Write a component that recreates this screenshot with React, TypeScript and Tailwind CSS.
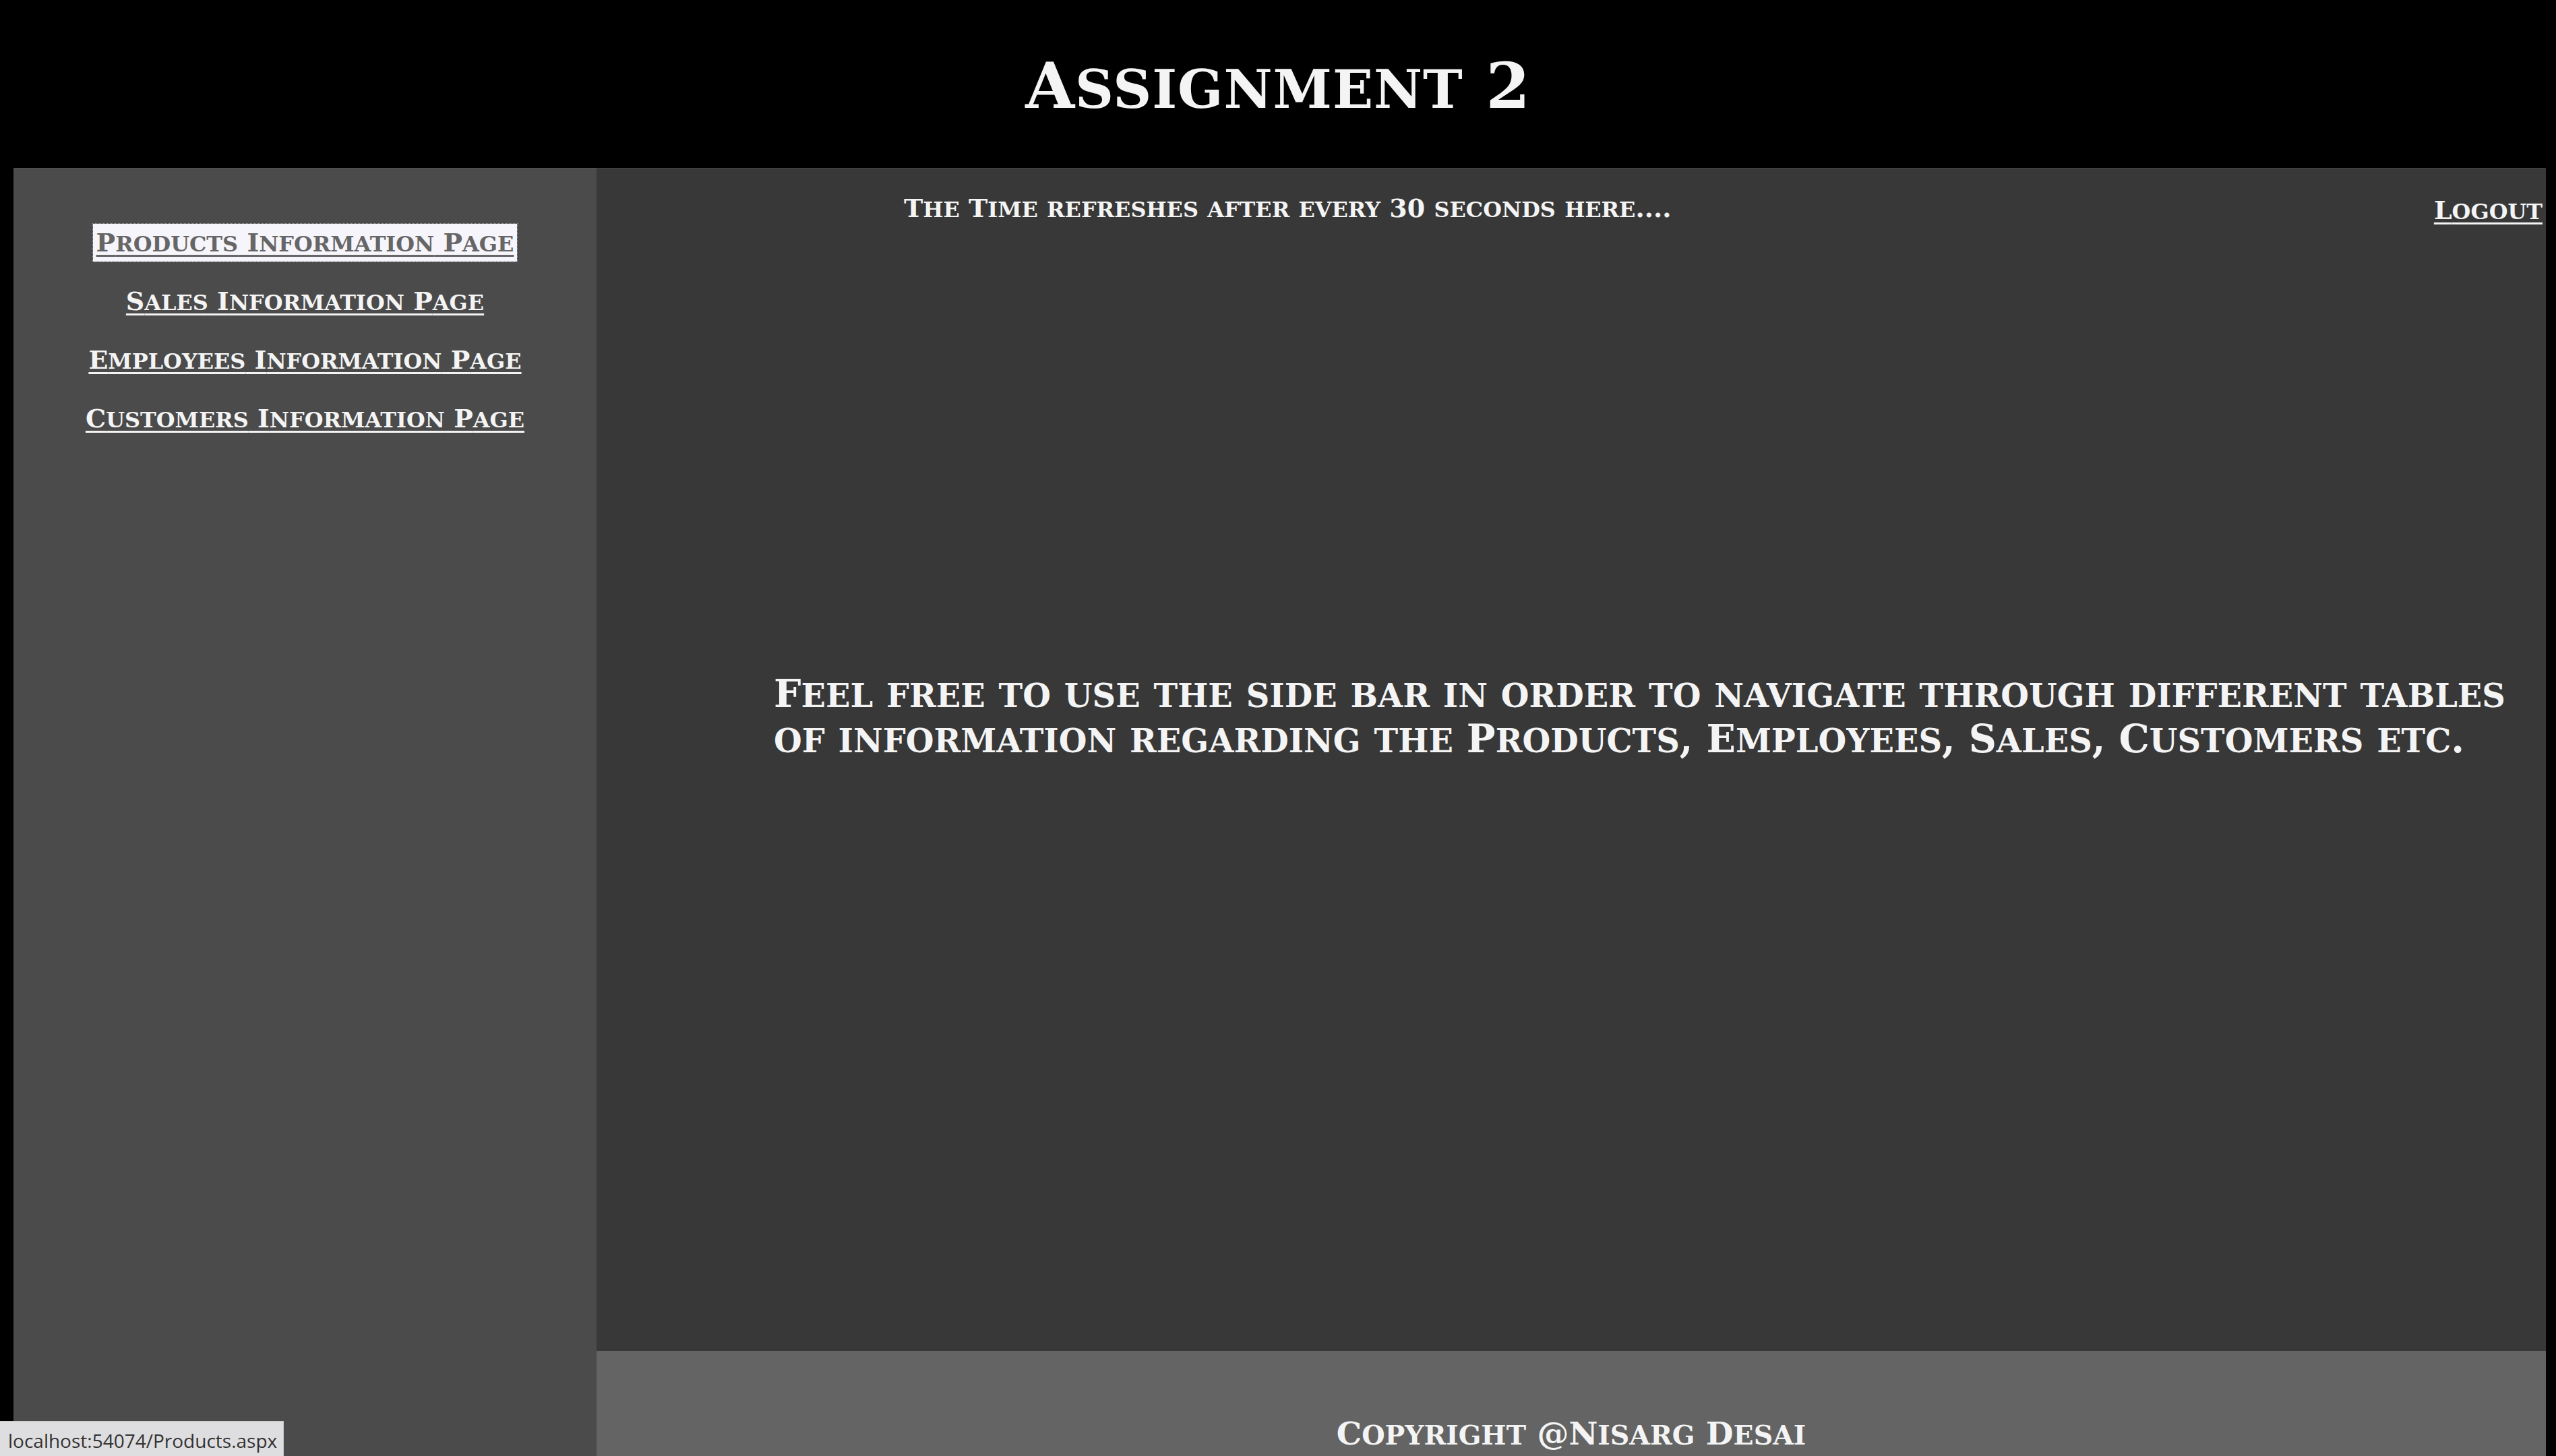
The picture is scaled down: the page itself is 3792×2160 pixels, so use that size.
const nav = [
  'Products Information Page',
  'Sales Information Page',
  'Employees Information Page',
  'Customers Information Page',
];

const cap = "font-['DejaVu_Serif',serif] font-bold";

// Copperplate-like small caps: lowercase letters shown as slightly smaller capitals
function SmallCaps({ text }: { text: string }) {
  const runs: { small: boolean; s: string }[] = [];
  for (const ch of text) {
    const small = ch !== ch.toUpperCase();
    const last = runs[runs.length - 1];
    if (last && last.small === small) last.s += ch;
    else runs.push({ small, s: ch });
  }
  return (
    <>
      {runs.map((r, i) =>
        r.small ? (
          <span key={i} className="text-[0.84em] uppercase">
            {r.s}
          </span>
        ) : (
          <span key={i}>{r.s}</span>
        ),
      )}
    </>
  );
}

export default function App() {
  return (
    <div className="h-screen overflow-hidden bg-black text-[#f4f4f4]">
      <header className="h-[249px] pt-[80px] text-center">
        <h1 className={`${cap} text-[94px] leading-none tracking-[0.01em]`}>
          <SmallCaps text="Assignment 2" />
        </h1>
      </header>

      <div className="flex h-[1911px] pl-[20px] pr-[15px]">
        <aside className="w-[865px] shrink-0 border-t border-[#545454] bg-[#4b4b4b] pt-[82px]">
          <nav className="flex flex-col items-center gap-[31px]">
            {nav.map((item, i) => (
              <a
                key={item}
                href="#"
                className={`${cap} px-[5px] py-[9px] text-[38px] leading-none underline decoration-[3px] underline-offset-[5px] ${
                  i === 0
                    ? 'bg-[#f5f5fb] text-[#666666] outline-1 outline-dotted outline-[#9a9a9a]'
                    : 'text-[#f4f4f4]'
                }`}
              >
                <SmallCaps text={item} />
              </a>
            ))}
          </nav>
        </aside>

        <div className="flex flex-1 flex-col">
          <main className="h-[1755px] border-t border-[#454545] bg-[#383838]">
            <div className="flex items-start justify-between pt-[40px] pr-[5px] pl-[456px]">
              <p className={`${cap} text-[38px] leading-none`}>
                <SmallCaps text="The Time refreshes after every 30 seconds here...." />
              </p>
              <a
                href="#"
                className={`${cap} mt-[3px] text-[38px] leading-none underline decoration-[3px] underline-offset-[5px]`}
              >
                <SmallCaps text="Logout" />
              </a>
            </div>
            <p className={`${cap} mt-[666px] pl-[263px] text-[57px] leading-[64px]`}>
              <SmallCaps text="Feel free to use the side bar in order to navigate through different tables" />
              <br />
              <SmallCaps text="of information regarding the Products, Employees, Sales, Customers etc." />
            </p>
          </main>
          <footer className="flex-1 bg-[#646464] pt-[99px] text-center">
            <p className={`${cap} text-[47px] leading-none`}>
              <SmallCaps text="Copyright @Nisarg Desai" />
            </p>
          </footer>
        </div>
      </div>

      <div className="fixed bottom-0 left-0 h-[52px] w-[421px] border-t border-r border-[#c8c8c8] bg-[#dedee0] pl-[12px] pt-[14px] font-['Open_Sans',sans-serif] text-[28px] leading-none text-[#333333]">
        localhost:54074/Products.aspx
      </div>
    </div>
  );
}
